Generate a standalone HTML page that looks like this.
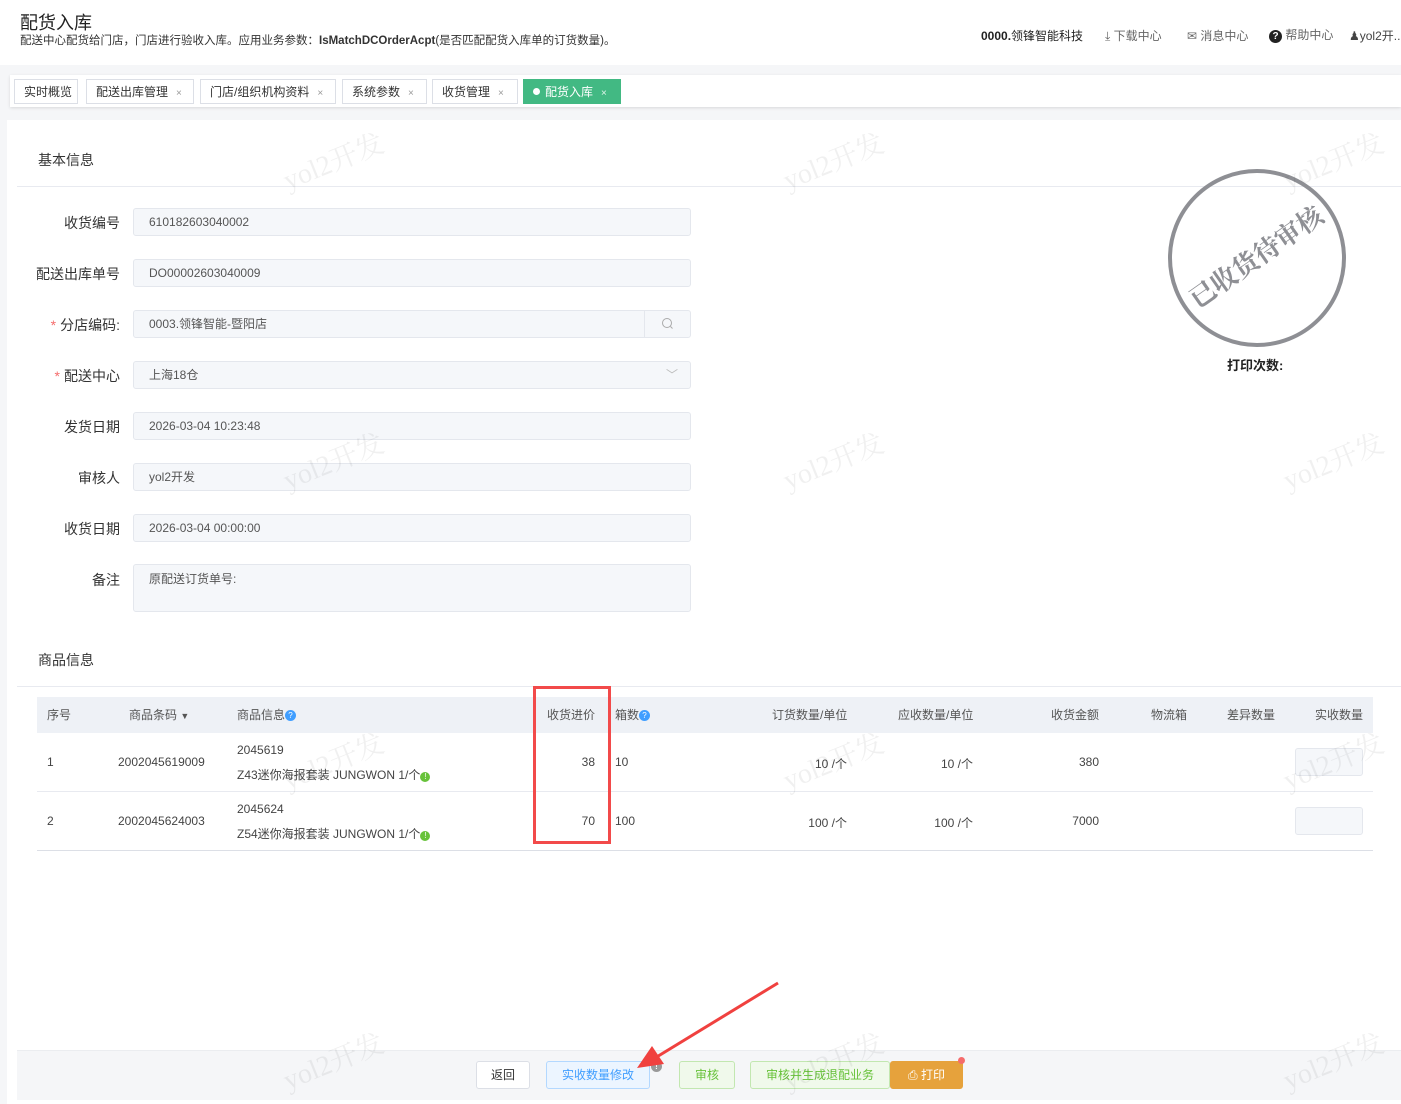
<!DOCTYPE html>
<html><head><meta charset="utf-8">
<style>
*{box-sizing:border-box;margin:0;padding:0}
body{width:1401px;height:1104px;overflow:hidden;background:#f5f6f8;font-family:"Liberation Sans","Noto Sans CJK SC",sans-serif;color:#333;position:relative;font-size:12px}
.a{position:absolute}
.hdr{left:0;top:0;width:1401px;height:65px;background:#fff}
.tabbar{left:10px;top:75px;width:1391px;height:32px;background:#fff;box-shadow:0 1px 3px rgba(0,0,0,.12)}
.tab{position:absolute;top:4px;height:25px;border:1px solid #dcdfe6;background:#fff;font-size:12px;line-height:25px;padding-left:9px;color:#333}
.tab i{font-style:normal;color:#999;font-size:10px;margin-left:8px}
.main{left:7px;top:120px;width:1394px;height:984px;background:#fff}
.sec{font-size:14px;color:#333}
.line{height:1px;background:#e8eaf0}
.lbl{width:110px;text-align:right;font-size:14px;color:#333;left:10px}
.lbl b{color:#f56c6c;font-weight:normal;margin-right:4px}
.inp{left:133px;width:558px;height:28px;background:#f5f7fa;border:1px solid #e4e7ed;border-radius:3px;font-size:12px;line-height:26px;padding-left:15px;color:#555}
.th{top:697px;height:36px;line-height:36px;font-size:12px;color:#555}
.td{font-size:12px;color:#444}
.wm{font-family:"Liberation Serif","Noto Serif CJK SC",serif;font-size:28px;color:rgba(0,0,0,.06);transform:rotate(-22deg);white-space:nowrap}
.btn{top:1061px;height:28px;border-radius:3px;font-size:12px;line-height:26px;text-align:center}
.q{display:inline-block;width:11px;height:11px;border-radius:50%;background:#409eff;color:#fff;font-size:8px;line-height:11px;text-align:center;vertical-align:1px}
.g{display:inline-block;width:10px;height:10px;border-radius:50%;background:#67c23a;color:#fff;font-size:8px;line-height:10px;text-align:center;vertical-align:0}
</style></head><body>
<div class="a hdr"></div>
<div class="a" style="left:20px;top:9px;font-size:18px;color:#222">配货入库</div>
<div class="a" style="left:20px;top:32px;font-size:11.5px;color:#333">配送中心配货给门店，门店进行验收入库。应用业务参数：<b>IsMatchDCOrderAcpt</b>(是否匹配配货入库单的订货数量)。</div>
<div class="a" style="left:981px;top:27px;font-size:12px;color:#222"><b>0000.</b>领锋智能科技</div>
<div class="a" style="left:1105px;top:27px;font-size:12px;color:#666">⤓ 下载中心</div>
<div class="a" style="left:1187px;top:27px;font-size:12px;color:#666">✉ 消息中心</div>
<div class="a" style="left:1269px;top:26px;font-size:12px;color:#666"><span style="display:inline-block;width:13px;height:13px;border-radius:50%;background:#222;color:#fff;font-size:10px;text-align:center;line-height:13px;font-weight:bold">?</span> 帮助中心</div>
<div class="a" style="left:1349px;top:27px;font-size:12px;color:#444">&#9823;yol2开..</div>

<div class="a tabbar">
<div class="tab" style="left:4px;width:64px">实时概览</div>
<div class="tab" style="left:76px;width:108px">配送出库管理<i>×</i></div>
<div class="tab" style="left:190px;width:136px">门店/组织机构资料<i>×</i></div>
<div class="tab" style="left:332px;width:85px">系统参数<i>×</i></div>
<div class="tab" style="left:422px;width:86px">收货管理<i>×</i></div>
<div class="tab" style="left:513px;width:98px;background:#42b983;border-color:#42b983;color:#fff"><span style="display:inline-block;width:7px;height:7px;border-radius:50%;background:#fff;margin-right:5px;vertical-align:1px"></span>配货入库<i style="color:#e0f5ea">×</i></div>
</div>

<div class="a main"></div>
<div class="a sec" style="left:38px;top:150px">基本信息</div>
<div class="a line" style="left:17px;top:186px;width:1384px"></div>

<div class="a lbl" style="top:213px">收货编号</div><div class="a inp" style="top:208px">610182603040002</div>
<div class="a lbl" style="top:264px">配送出库单号</div><div class="a inp" style="top:259px">DO00002603040009</div>
<div class="a lbl" style="top:315px"><b>*</b>分店编码:</div><div class="a inp" style="top:310px">0003.领锋智能-暨阳店<span style="position:absolute;right:0;top:-1px;width:46px;height:28px;border-left:1px solid #e4e7ed"><svg width="46" height="28"><circle cx="22" cy="13" r="4.5" fill="none" stroke="#aaa" stroke-width="1"/><line x1="25.5" y1="16.5" x2="27.5" y2="18.5" stroke="#aaa"/></svg></span></div>
<div class="a lbl" style="top:366px"><b>*</b>配送中心</div><div class="a inp" style="top:361px">上海18仓<span style="position:absolute;right:12px;top:0;color:#bbb">﹀</span></div>
<div class="a lbl" style="top:417px">发货日期</div><div class="a inp" style="top:412px">2026-03-04 10:23:48</div>
<div class="a lbl" style="top:468px">审核人</div><div class="a inp" style="top:463px">yol2开发</div>
<div class="a lbl" style="top:519px">收货日期</div><div class="a inp" style="top:514px">2026-03-04 00:00:00</div>
<div class="a lbl" style="top:570px">备注</div><div class="a inp" style="top:564px;height:48px;line-height:28px">原配送订货单号:</div>

<svg class="a" style="left:1160px;top:160px" width="200" height="200">
<circle cx="97" cy="98" r="87" fill="none" stroke="#8e8f94" stroke-width="4"/>
<text x="97" y="106" text-anchor="middle" transform="rotate(-35 97 98)" font-family="Noto Serif CJK SC,serif" font-weight="bold" font-size="26" fill="#8e8f94">已收货待审核</text>
</svg>
<div class="a" style="left:1227px;top:355px;font-size:13px;font-weight:bold;color:#222">打印次数:</div>

<div class="a sec" style="left:38px;top:650px">商品信息</div>
<div class="a line" style="left:17px;top:686px;width:1384px"></div>

<div class="a" style="left:37px;top:697px;width:1336px;height:36px;background:#eef1f6"></div>
<div class="a th" style="left:47px">序号</div>
<div class="a th" style="left:129px">商品条码 <span style="font-size:9px">▼</span></div>
<div class="a th" style="left:237px">商品信息<span class="q">?</span></div>
<div class="a th" style="left:547px">收货进价</div>
<div class="a th" style="left:615px">箱数<span class="q">?</span></div>
<div class="a th" style="left:772px">订货数量/单位</div>
<div class="a th" style="left:898px">应收数量/单位</div>
<div class="a th" style="left:1051px">收货金额</div>
<div class="a th" style="left:1151px">物流箱</div>
<div class="a th" style="left:1227px">差异数量</div>
<div class="a th" style="left:1315px">实收数量</div>

<div class="a line" style="left:37px;top:791px;width:1336px"></div>
<div class="a line" style="left:37px;top:850px;width:1336px;background:#dcdfe6"></div>

<div class="a td" style="left:47px;top:755px">1</div>
<div class="a td" style="left:118px;top:755px">2002045619009</div>
<div class="a td" style="left:237px;top:743px">2045619</div>
<div class="a td" style="left:237px;top:766px">Z43迷你海报套装 JUNGWON 1/个<span class="g">!</span></div>
<div class="a td" style="left:560px;width:35px;text-align:right;top:755px">38</div>
<div class="a td" style="left:615px;top:755px">10</div>
<div class="a td" style="left:780px;width:67px;text-align:right;top:755px">10 /个</div>
<div class="a td" style="left:906px;width:67px;text-align:right;top:755px">10 /个</div>
<div class="a td" style="left:1040px;width:59px;text-align:right;top:755px">380</div>
<div class="a" style="left:1295px;top:748px;width:68px;height:28px;background:#f5f7fa;border:1px solid #e4e7ed;border-radius:3px"></div>

<div class="a td" style="left:47px;top:814px">2</div>
<div class="a td" style="left:118px;top:814px">2002045624003</div>
<div class="a td" style="left:237px;top:802px">2045624</div>
<div class="a td" style="left:237px;top:825px">Z54迷你海报套装 JUNGWON 1/个<span class="g">!</span></div>
<div class="a td" style="left:560px;width:35px;text-align:right;top:814px">70</div>
<div class="a td" style="left:615px;top:814px">100</div>
<div class="a td" style="left:780px;width:67px;text-align:right;top:814px">100 /个</div>
<div class="a td" style="left:906px;width:67px;text-align:right;top:814px">100 /个</div>
<div class="a td" style="left:1040px;width:59px;text-align:right;top:814px">7000</div>
<div class="a" style="left:1295px;top:807px;width:68px;height:28px;background:#f5f7fa;border:1px solid #e4e7ed;border-radius:3px"></div>

<div class="a" style="left:533px;top:686px;width:78px;height:158px;border:3px solid #f24a4a"></div>

<div class="a" style="left:17px;top:1050px;width:1384px;height:50px;background:#f5f6f8;border-top:1px solid #ebedf0"></div>
<div class="a btn" style="left:476px;width:54px;background:#fff;border:1px solid #dcdfe6;color:#333">返回</div>
<div class="a btn" style="left:546px;width:104px;background:#ecf5ff;border:1px solid #b3d8ff;color:#409eff">实收数量修改</div>
<div class="a" style="left:651px;top:1061px;width:11px;height:11px;border-radius:50%;background:#999;color:#fff;font-size:8px;text-align:center;line-height:11px;font-weight:bold">!</div>
<div class="a btn" style="left:679px;width:56px;background:#f0f9eb;border:1px solid #c2e7b0;color:#67c23a">审核</div>
<div class="a btn" style="left:750px;width:140px;background:#f0f9eb;border:1px solid #c2e7b0;color:#67c23a">审核并生成退配业务</div>
<div class="a btn" style="left:890px;width:73px;background:#e6a23c;border:1px solid #e6a23c;color:#fff">⎙ 打印</div>
<div class="a" style="left:958px;top:1057px;width:7px;height:7px;border-radius:50%;background:#f56c6c"></div>

<svg class="a" style="left:0;top:0;pointer-events:none" width="1401" height="1104">
<line x1="778" y1="983" x2="655" y2="1058" stroke="#f0413f" stroke-width="3"/>
<polygon points="637,1068 652,1046 664,1064" fill="#f0413f"/>
</svg>

<div class="a wm" style="left:280px;top:140px">yol2开发</div>
<div class="a wm" style="left:780px;top:140px">yol2开发</div>
<div class="a wm" style="left:1280px;top:140px">yol2开发</div>
<div class="a wm" style="left:280px;top:440px">yol2开发</div>
<div class="a wm" style="left:780px;top:440px">yol2开发</div>
<div class="a wm" style="left:1280px;top:440px">yol2开发</div>
<div class="a wm" style="left:280px;top:740px">yol2开发</div>
<div class="a wm" style="left:780px;top:740px">yol2开发</div>
<div class="a wm" style="left:1280px;top:740px">yol2开发</div>
<div class="a wm" style="left:280px;top:1040px">yol2开发</div>
<div class="a wm" style="left:780px;top:1040px">yol2开发</div>
<div class="a wm" style="left:1280px;top:1040px">yol2开发</div>
</body></html>
